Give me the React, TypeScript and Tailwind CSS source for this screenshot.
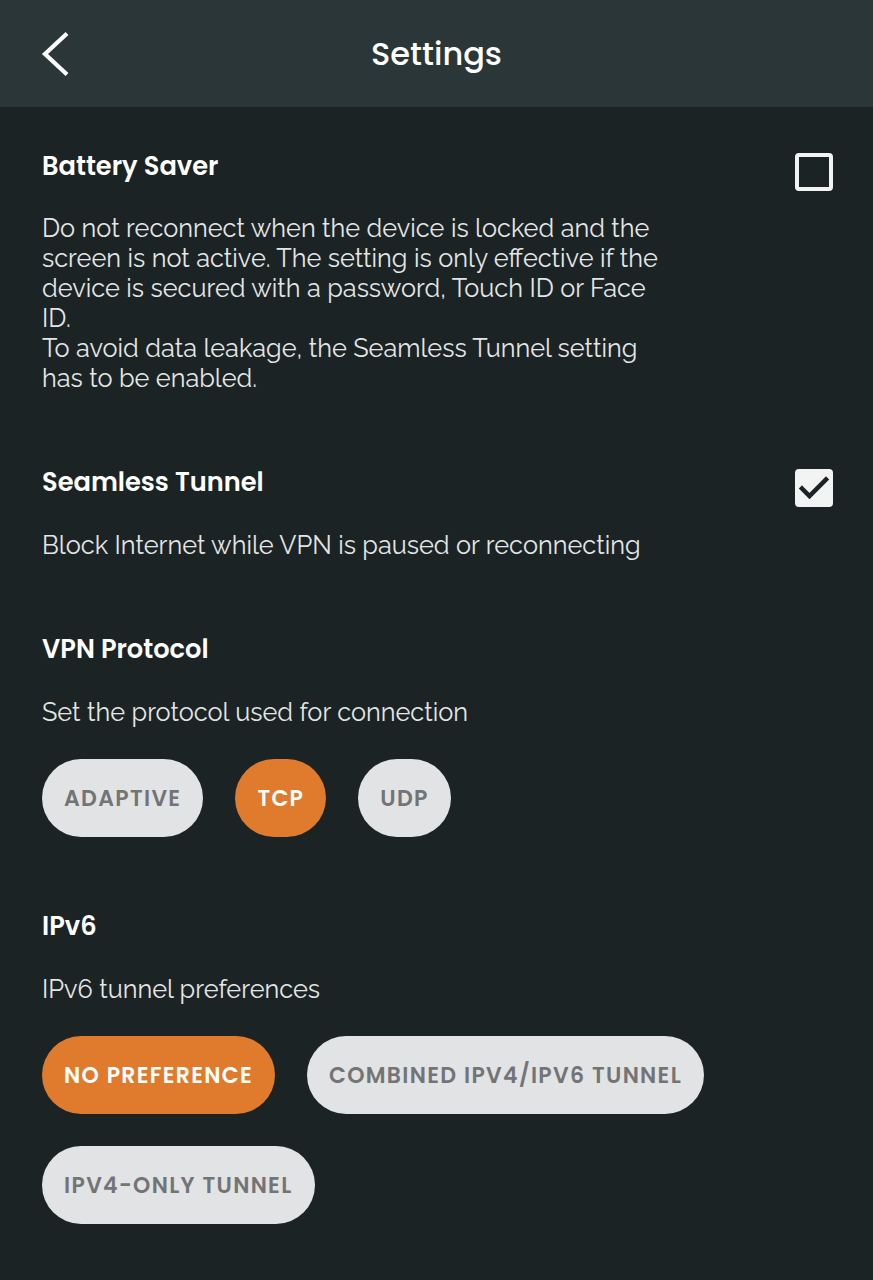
import type { ReactNode } from 'react';

const headingFont = "font-['Poppins','Inter','Noto_Sans',sans-serif]";
const bodyFont = "font-['Raleway','Lato','Noto_Sans',sans-serif]";

function Checkbox({ checked }: { checked: boolean }) {
  if (checked) {
    return (
      <div className="mt-[5px] h-[38px] w-[38px] shrink-0 rounded-[4px] bg-[#f2f4f3]">
        <svg viewBox="0 0 38 38" className="h-full w-full">
          <path d="M7 19.5l7.5 7.5L31 10.5" fill="none" stroke="#1c2325" strokeWidth={4.5} strokeLinecap="square" />
        </svg>
      </div>
    );
  }
  return <div className="mt-[5px] h-[38px] w-[38px] shrink-0 rounded-[4px] border-4 border-[#f2f4f3]" />;
}

function Pill({ label, active }: { label: string; active?: boolean }) {
  return (
    <button
      className={
        active
          ? `h-[78px] rounded-full bg-[#e07b2d] px-[22px] text-[22px] font-semibold tracking-[0.06em] text-white ${headingFont}`
          : `h-[78px] rounded-full bg-[#e2e3e5] px-[22px] text-[22px] font-semibold tracking-[0.06em] text-[#737475] ${headingFont}`
      }
    >
      {label}
    </button>
  );
}

function Section({ title, checked, children }: { title: string; checked?: boolean; children: ReactNode }) {
  return (
    <section>
      {/* row keeps the heading's line height; the checkbox hangs a little below it */}
      <div className="flex h-[36px] items-start justify-between">
        <h2 className={`text-[25.7px] leading-[36px] font-semibold text-white ${headingFont}`}>{title}</h2>
        {checked !== undefined && <Checkbox checked={checked} />}
      </div>
      {children}
    </section>
  );
}

export default function App() {
  return (
    <div className="min-h-[1280px] w-full bg-[#1b2325]">
      {/* Header */}
      <header className="relative flex h-[107px] items-center justify-center bg-[#2a3638]">
        <button className="absolute left-[40px] top-[31px]">
          <svg width="32" height="46" viewBox="0 0 32 46">
            <path d="M27 2.5L5 23l22 20.5" fill="none" stroke="white" strokeWidth={4.2} />
          </svg>
        </button>
        <h1 className={`text-[32px] font-medium text-white ${headingFont}`}>Settings</h1>
      </header>

      <main className="flex flex-col gap-[71px] pl-[42px] pr-[40px] pt-[41px] pb-[56px]">
        <Section title="Battery Saver" checked={false}>
          <p className={`mt-[29px] w-[628px] text-[25.3px] leading-[30px] text-[#e4e6e6] ${bodyFont}`}>
            Do not reconnect when the device is locked and the screen is not active. The setting is only effective if the
            device is secured with a password, Touch ID or Face ID.
            <br />
            To avoid data leakage, the Seamless Tunnel setting has to be enabled.
          </p>
        </Section>

        <Section title="Seamless Tunnel" checked={true}>
          <p className={`mt-[30px] text-[25.3px] leading-[30px] text-[#e4e6e6] ${bodyFont}`}>
            Block Internet while VPN is paused or reconnecting
          </p>
        </Section>

        <Section title="VPN Protocol">
          <p className={`mt-[30px] text-[25.3px] leading-[30px] text-[#e4e6e6] ${bodyFont}`}>
            Set the protocol used for connection
          </p>
          <div className="mt-[32px] flex flex-wrap gap-[32px]">
            <Pill label="ADAPTIVE" />
            <Pill label="TCP" active />
            <Pill label="UDP" />
          </div>
        </Section>

        <Section title="IPv6">
          <p className={`mt-[30px] text-[25.3px] leading-[30px] text-[#e4e6e6] ${bodyFont}`}>IPv6 tunnel preferences</p>
          <div className="mt-[32px] flex max-w-[720px] flex-wrap gap-[32px]">
            <Pill label="NO PREFERENCE" active />
            <Pill label="COMBINED IPV4/IPV6 TUNNEL" />
            <Pill label="IPV4-ONLY TUNNEL" />
          </div>
        </Section>
      </main>
    </div>
  );
}
